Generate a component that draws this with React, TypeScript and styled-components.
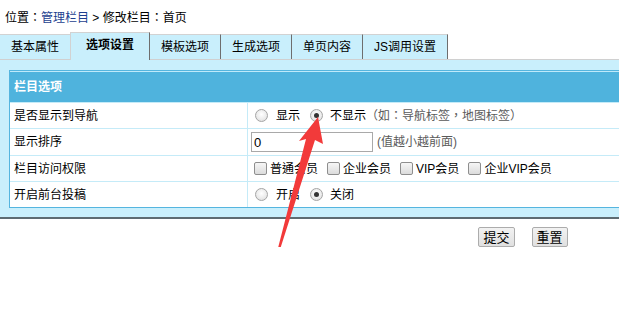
import React from "react";
import styled, { createGlobalStyle } from "styled-components";

const GlobalStyle = createGlobalStyle`
  html, body {
    margin: 0;
    padding: 0;
    overflow: hidden;
    background: #ffffff;
  }
  body {
    font-family: "Liberation Sans", "Noto Sans CJK TC", sans-serif;
    font-size: 12px;
    color: #000;
  }
`;

const Page = styled.div`
  position: relative;
  width: 1046px;
`;

const Breadcrumb = styled.div`
  height: 28px;
  padding: 4px 0 0 5px;
  display: flex;
  align-items: center;
  line-height: 14px;
`;

const CrumbLink = styled.span`
  color: #1d3f8f;
`;

const Tabs = styled.div`
  display: flex;
  align-items: flex-end;
  height: 27px;
`;

const Tab = styled.div<{ $active?: boolean }>`
  box-sizing: border-box;
  display: flex;
  align-items: center;
  justify-content: center;
  background: #c9effc;
  border-top: 1px solid #d2d2d2;
  border-right: 1px solid #6e6e6e;
  line-height: 14px;
  height: ${(p) => (p.$active ? "28px" : "25px")};
  padding: ${(p) => (p.$active ? "0 15px 4px 15px" : "0 11px")};
  font-weight: ${(p) => (p.$active ? "bold" : "normal")};
  margin-bottom: ${(p) => (p.$active ? "-1px" : "0")};
  margin-left: ${(p) => (p.$active ? "-1px" : "0")};
  border-left: ${(p) => (p.$active ? "1px solid #d2d2d2" : "0")};
  position: ${(p) => (p.$active ? "relative" : "static")};
  z-index: ${(p) => (p.$active ? 1 : "auto")};
`;

const Panel = styled.div`
  background: #c9effc;
  border-top: 1px solid #d0d0d0;
  border-bottom: 2px solid #5d6b72;
  padding: 10px 10px 9px 9px;
`;

const Table = styled.table`
  width: 100%;
  border-collapse: separate;
  border-spacing: 0;
  border: 1px solid #55b5df;
  background: #ffffff;
`;

const HeadCell = styled.th`
  box-sizing: border-box;
  height: 31px;
  border-top: 1px solid #bfeafa;
  background: #4fb3dd;
  color: #ffffff;
  font-weight: bold;
  text-align: left;
  padding: 0 0 0 4px;
  line-height: 14px;
`;

const LabelCell = styled.td<{ $tall?: boolean }>`
  box-sizing: border-box;
  width: 238px;
  height: ${(p) => (p.$tall ? "27px" : "26px")};
  border-top: 1px solid #c5ebf8;
  border-right: 1px solid #c5ebf8;
  padding: 0 0 0 4px;
  line-height: 14px;
`;

const FieldCell = styled.td`
  box-sizing: border-box;
  border-top: 1px solid #c5ebf8;
  padding: 0 0 0 3px;
  line-height: 14px;
`;

const Field = styled.div`
  display: flex;
  align-items: center;
`;

const Option = styled.label<{ $gap?: number; $space?: number }>`
  display: flex;
  align-items: center;
  gap: ${(p) => p.$gap ?? 7}px;
  margin-right: ${(p) => p.$space ?? 10}px;
`;

const Radio = styled.span<{ $checked?: boolean }>`
  box-sizing: border-box;
  width: 13px;
  height: 13px;
  border-radius: 50%;
  border: 1px solid #a5a5a5;
  background: radial-gradient(circle at 50% 40%, #ffffff 0%, #ececec 55%, #d8d8d8 100%);
  display: flex;
  align-items: center;
  justify-content: center;
  &::after {
    content: "";
    display: ${(p) => (p.$checked ? "block" : "none")};
    width: 5px;
    height: 5px;
    border-radius: 50%;
    background: #333333;
  }
`;

const RadioWrap = styled.div`
  display: flex;
  align-items: center;
  padding-left: 4px;
`;

const Check = styled.span`
  box-sizing: border-box;
  width: 13px;
  height: 13px;
  border: 1px solid #8e8e8e;
  border-radius: 2px;
  background: linear-gradient(#f6f6f6, #dcdcdc);
`;

const CheckWrap = styled.div`
  display: flex;
  align-items: center;
  padding-left: 3px;
`;

const Hint = styled.span`
  color: #5a5a5a;
`;

const NumberInput = styled.input`
  box-sizing: border-box;
  width: 122px;
  height: 20px;
  margin: 0 4px 0 0;
  border: 1px solid #a9a9a9;
  padding: 0 2px;
  font-family: "Liberation Sans", sans-serif;
  font-size: 13px;
  outline: none;
`;

const Actions = styled.div`
  display: flex;
  justify-content: center;
  gap: 17px;
  padding: 8px 0 0 0;
`;

const Button = styled.button`
  box-sizing: border-box;
  height: 20px;
  padding: 0 4px;
  border: 1px solid #acacac;
  border-radius: 2px;
  background: linear-gradient(#f2f2f2, #e0e0e0);
  font-family: "Noto Sans CJK SC", sans-serif;
  font-size: 13px;
  line-height: 16px;
  color: #000;
`;

const Overlay = styled.svg`
  position: absolute;
  left: 0;
  top: 0;
  pointer-events: none;
`;

const tabs = ["基本属性", "选项设置", "模板选项", "生成选项", "单页内容", "JS调用设置"];
const members = ["普通会员", "企业会员", "VIP会员", "企业VIP会员"];

export default function App() {
  return (
    <Page>
      <GlobalStyle />
      <Breadcrumb>
        位置：<CrumbLink>管理栏目</CrumbLink>&nbsp;&gt;&nbsp;修改栏目：首页
      </Breadcrumb>
      <Tabs>
        {tabs.map((t, i) => (
          <Tab key={t} $active={i === 1}>
            {t}
          </Tab>
        ))}
      </Tabs>
      <Panel>
        <Table>
          <thead>
            <tr>
              <HeadCell colSpan={2}>栏目选项</HeadCell>
            </tr>
          </thead>
          <tbody>
            <tr>
              <LabelCell>是否显示到导航</LabelCell>
              <FieldCell>
                <RadioWrap>
                  <Option $gap={8}>
                    <Radio />
                    显示
                  </Option>
                  <Option>
                    <Radio $checked />
                    <span>
                      不显示<Hint>（如：导航标签，地图标签）</Hint>
                    </span>
                  </Option>
                </RadioWrap>
              </FieldCell>
            </tr>
            <tr>
              <LabelCell $tall>显示排序</LabelCell>
              <FieldCell>
                <Field>
                  <NumberInput defaultValue="0" />
                  <Hint>(值越小越前面)</Hint>
                </Field>
              </FieldCell>
            </tr>
            <tr>
              <LabelCell>栏目访问权限</LabelCell>
              <FieldCell>
                <CheckWrap>
                  {members.map((m) => (
                    <Option key={m} $gap={3} $space={9}>
                      <Check />
                      {m}
                    </Option>
                  ))}
                </CheckWrap>
              </FieldCell>
            </tr>
            <tr>
              <LabelCell>开启前台投稿</LabelCell>
              <FieldCell>
                <RadioWrap>
                  <Option $gap={8}>
                    <Radio />
                    开启
                  </Option>
                  <Option>
                    <Radio $checked />
                    关闭
                  </Option>
                </RadioWrap>
              </FieldCell>
            </tr>
          </tbody>
        </Table>
      </Panel>
      <Actions>
        <Button>提交</Button>
        <Button>重置</Button>
      </Actions>
      <Overlay width="619" height="328" viewBox="0 0 619 328">
        <polygon
          points="318,117 323,144 315,140 268,287 306,139 299,141"
          fill="#f23a3a"
        />
      </Overlay>
    </Page>
  );
}
